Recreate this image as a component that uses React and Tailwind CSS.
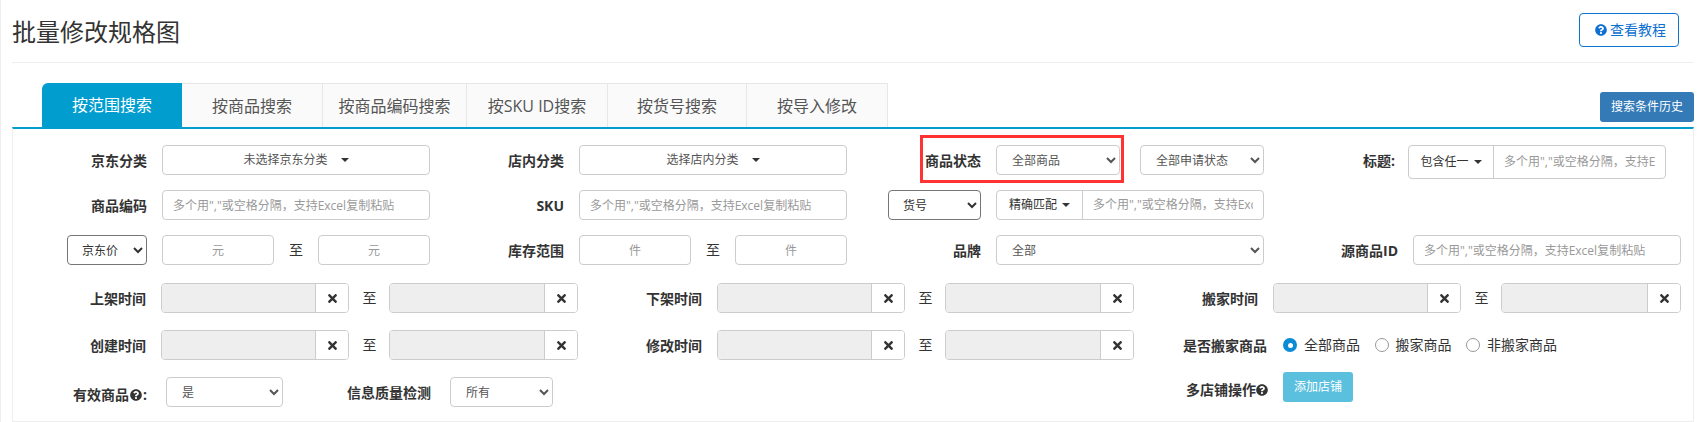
import { FaQuestionCircle, FaTimes } from 'react-icons/fa'

const tabs = [
  { name: '按范围搜索', width: 'w-[140px]' },
  { name: '按商品搜索', width: 'w-[141px]' },
  { name: '按商品编码搜索', width: 'w-[144px]' },
  { name: '按SKU ID搜索', width: 'w-[141px]' },
  { name: '按货号搜索', width: 'w-[139px]' },
  { name: '按导入修改', width: 'w-[141px]' },
]

const hint = '多个用","或空格分隔，支持Excel复制粘贴'
const inputClass = 'h-[30px] rounded-[4px] border border-[#ccc] bg-white text-xs text-[#555] placeholder:text-[#999] outline-none'
const selectClass = 'h-[30px] rounded-[4px] border border-[#ccc] bg-white pl-[11px] text-xs text-[#555] outline-none'

function Label({ children, className = 'w-[134px]' }) {
  return (
    <label className={`shrink-0 pt-[6px] text-right text-sm font-bold text-[#333] ${className}`}>
      {children}
    </label>
  )
}

function Caret() {
  return <span className="inline-block h-0 w-0 border-x-[4px] border-t-[4px] border-x-transparent border-t-[#333]" />
}

function CascadeButton({ text }) {
  return (
    <button className="ml-[15px] flex h-[30px] w-[268px] items-center justify-center gap-[13px] rounded-[4px] border border-[#ccc] bg-white text-xs text-[#555]">
      {text}
      <Caret />
    </button>
  )
}

function TextInput({ className = 'w-[268px] ml-[15px]', placeholder = hint, center }) {
  return (
    <input
      placeholder={placeholder}
      className={`${inputClass} ${center ? 'text-center' : 'px-[10px]'} ${className}`}
    />
  )
}

function Range({ unit }) {
  return (
    <div className="ml-[15px] flex w-[268px] items-center">
      <TextInput className="w-[112px]" placeholder={unit} center />
      <span className="w-[44px] text-center text-sm text-[#333]">至</span>
      <TextInput className="w-[112px]" placeholder={unit} center />
    </div>
  )
}

function DateBox({ width }) {
  return (
    <div className={`flex h-[30px] overflow-hidden rounded-[4px] border border-[#ccc] ${width}`}>
      <div className="flex-1 bg-[#eee]" />
      <button className="flex w-[33px] items-center justify-center border-l border-[#ccc] bg-white text-[#333]">
        <FaTimes className="h-[13px] w-[13px]" />
      </button>
    </div>
  )
}

function DateRange({ label, secondWidth = 'w-[189px]' }) {
  return (
    <div className="flex">
      <Label className="w-[133px]">{label}</Label>
      <div className="ml-[15px] flex items-center">
        <DateBox width="w-[188px]" />
        <span className="w-[40px] pl-[1px] text-center text-sm text-[#333]">至</span>
        <DateBox width={secondWidth} />
      </div>
    </div>
  )
}

function Radio({ label, checked }) {
  return (
    <label className="flex items-center gap-[7px] text-sm text-[#333]">
      {checked ? (
        <span className="flex h-[14px] w-[14px] items-center justify-center rounded-full bg-[#0b8ad6]">
          <span className="h-[5px] w-[5px] rounded-full bg-white" />
        </span>
      ) : (
        <span className="h-[14px] w-[14px] rounded-full border border-[#999] bg-white" />
      )}
      {label}
    </label>
  )
}

export default function App() {
  return (
    <div className="h-[422px] overflow-hidden border-l border-[#eee] bg-white pl-[11px] pr-[9px] font-['Open_Sans','Noto_Sans_CJK_SC',sans-serif]">
      {/* Header */}
      <div className="flex h-[63px] justify-between border-b border-[#eee] pt-[13px]">
        <h1 className="pt-[1px] text-2xl font-normal leading-[36px] text-[#333]">批量修改规格图</h1>
        <button className="mr-[15px] flex h-[34px] w-[100px] items-center justify-center gap-[3px] rounded-[4px] border border-[#0d74d1] pl-[3px] text-sm text-[#0d6fd0]">
          <FaQuestionCircle className="h-[12px] w-[12px]" />
          查看教程
        </button>
      </div>

      {/* Tabs */}
      <div className="mt-[20px] flex h-[44px] items-start justify-between pl-[30px]">
        <div className="flex h-[44px]">
          {tabs.map((tab, i) => (
            <div
              key={tab.name}
              className={`flex items-center justify-center text-base ${tab.width} ${
                i === 0
                  ? 'rounded-tl-[6px] bg-[#029dcf] text-white'
                  : 'border-r border-t border-[#e7e7e7] bg-[#fafafa] text-[#555]'
              }`}
            >
              {tab.name}
            </div>
          ))}
        </div>
        <button className="mt-[9px] h-[30px] w-[94px] rounded-[3px] bg-[#337ab7] text-xs text-white">
          搜索条件历史
        </button>
      </div>

      {/* Search form */}
      <div className="h-[295px] border-x border-b border-t-2 border-[#eee] border-t-[#029dcf] pt-[16px]">
        <div className="grid grid-cols-[repeat(4,417px)] grid-rows-[repeat(3,30px)] gap-y-[15px]">
          <div className="flex">
            <Label>京东分类</Label>
            <CascadeButton text="未选择京东分类" />
          </div>
          <div className="flex">
            <Label>店内分类</Label>
            <CascadeButton text="选择店内分类" />
          </div>
          <div className="relative flex">
            <Label>商品状态</Label>
            <select className={`${selectClass} ml-[15px] w-[124px]`}>
              <option>全部商品</option>
            </select>
            <select className={`${selectClass} ml-[20px] w-[124px]`}>
              <option>全部申请状态</option>
            </select>
            <div className="absolute left-[73px] top-[-10px] h-[48px] w-[204px] border-[3px] border-[#f33]" />
          </div>
          <div className="flex">
            <Label className="w-[131px]">标题:</Label>
            <div className="ml-[13px] flex h-[34px] w-[258px] rounded-[4px] border border-[#ccc]">
              <button className="flex w-[85px] shrink-0 items-center justify-center gap-[5px] border-r border-[#ccc] text-xs text-[#333]">
                包含任一
                <Caret />
              </button>
              <input placeholder={hint} className="min-w-0 flex-1 px-[10px] text-xs outline-none placeholder:text-[#999]" />
            </div>
          </div>

          <div className="flex">
            <Label>商品编码</Label>
            <TextInput />
          </div>
          <div className="flex">
            <Label>SKU</Label>
            <TextInput />
          </div>
          <div className="flex">
            <select className="ml-[41px] h-[30px] w-[93px] rounded-[4px] border border-[#767676] bg-white pl-[10px] text-xs text-[#333] outline-none">
              <option>货号</option>
            </select>
            <div className="ml-[15px] flex h-[30px] w-[268px] rounded-[4px] border border-[#ccc]">
              <button className="flex w-[86px] shrink-0 items-center justify-center gap-[5px] border-r border-[#ccc] text-xs text-[#333]">
                精确匹配
                <Caret />
              </button>
              <input placeholder={hint} className="min-w-0 flex-1 px-[10px] text-xs outline-none placeholder:text-[#999]" />
            </div>
          </div>
          <div />

          <div className="flex">
            <select className="ml-[54px] h-[30px] w-[80px] rounded-[4px] border border-[#767676] bg-white pl-[10px] text-xs text-[#333] outline-none">
              <option>京东价</option>
            </select>
            <Range unit="元" />
          </div>
          <div className="flex">
            <Label>库存范围</Label>
            <Range unit="件" />
          </div>
          <div className="flex">
            <Label>品牌</Label>
            <select className={`${selectClass} ml-[15px] w-[268px]`}>
              <option>全部</option>
            </select>
          </div>
          <div className="flex">
            <Label>源商品ID</Label>
            <TextInput />
          </div>
        </div>

        <div className="mt-[18px] grid grid-cols-[repeat(3,556px)] gap-y-[17px]">
          <DateRange label="上架时间" />
          <DateRange label="下架时间" />
          <DateRange label="搬家时间" secondWidth="w-[180px]" />
          <DateRange label="创建时间" />
          <DateRange label="修改时间" />
          <div className="flex h-[30px]">
            <Label className="w-[142px]">是否搬家商品</Label>
            <div className="ml-[16px] flex items-center gap-[14.5px]">
              <Radio label="全部商品" checked />
              <Radio label="搬家商品" />
              <Radio label="非搬家商品" />
            </div>
          </div>

          <div className="flex h-[30px]">
            <Label className="flex w-[134px] items-center justify-end">
              有效商品
              <FaQuestionCircle className="mx-[1px] h-[12px] w-[12px]" />:
            </Label>
            <select className={`${selectClass} ml-[19px] w-[117px]`}>
              <option>是</option>
            </select>
            <Label className="ml-[64px] w-[84px]">信息质量检测</Label>
            <select className={`${selectClass} ml-[19px] w-[103px]`}>
              <option>所有</option>
            </select>
          </div>
          <div />
          <div className="flex h-[30px]">
            <Label className="mt-[-5px] flex h-[30px] w-[143px] items-center justify-end">
              多店铺操作
              <FaQuestionCircle className="h-[12px] w-[12px]" />
            </Label>
            <button className="ml-[15px] mt-[-5px] h-[30px] w-[70px] rounded-[3px] bg-[#5bc0de] text-xs text-white">
              添加店铺
            </button>
          </div>
        </div>
      </div>
    </div>
  )
}
